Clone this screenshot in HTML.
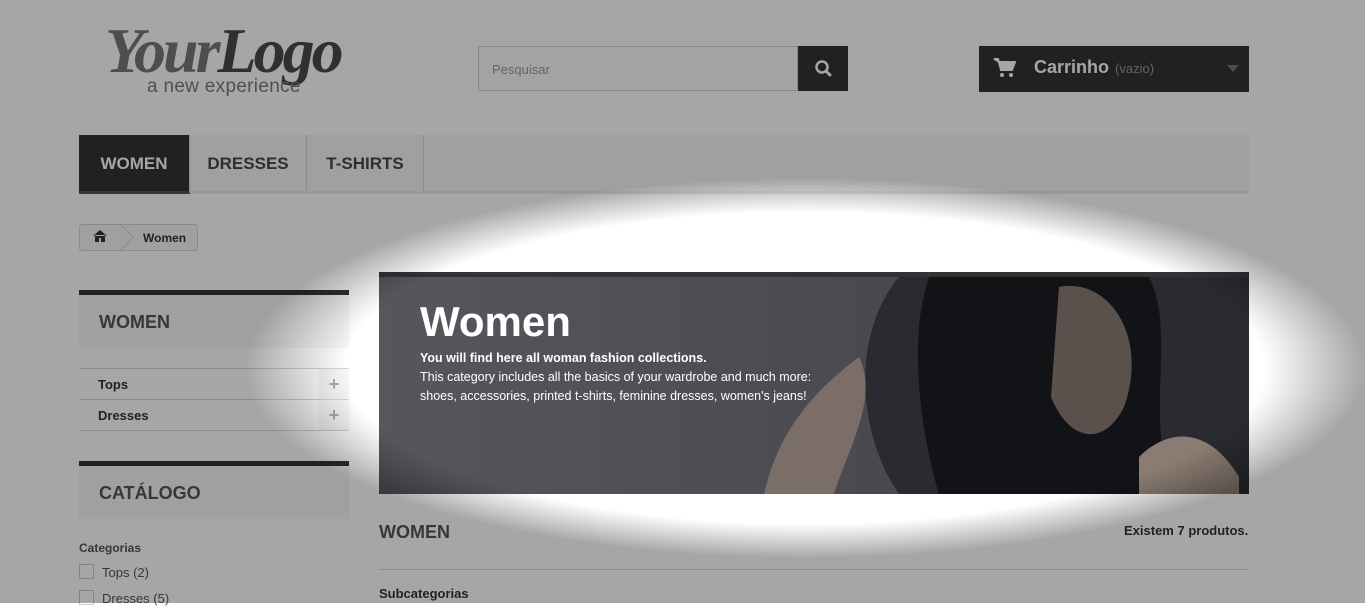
<!DOCTYPE html>
<html><head><meta charset="utf-8"><style>
*{margin:0;padding:0;box-sizing:border-box}
body{width:1365px;height:603px;overflow:hidden;background:#fff;font-family:"Liberation Sans",Arial,sans-serif;position:relative;color:#333}
.abs{position:absolute}
.logo1{left:105px;top:14px;font-family:"Liberation Serif",serif;font-style:italic;font-size:64px;font-weight:bold;color:#777;letter-spacing:-3px}
.logo1 b{color:#4a4a4a}
.logo2{left:147px;top:76px;font-size:19px;color:#7a7a7a;letter-spacing:0.3px}
.search{left:478px;top:46px;width:320px;height:45px;border:1px solid #d6d4d4;background:#fbfbfb;font-size:13px;color:#999;padding:15px 0 0 13px}
.sbtn{left:798px;top:46px;width:50px;height:45px;background:#333}
.cart{left:979px;top:46px;width:270px;height:46px;background:#333;color:#fff;font-size:18px;font-weight:bold;padding:11px 0 0 55px}
.cart small{font-size:13px;font-weight:normal;color:#9a9a9a;margin-left:6px}
.nav{left:79px;top:135px;width:1170px;height:59px;background:#f6f6f6;border-bottom:3px solid #e9e9e9}
.nav div{position:absolute;top:0;height:56px;font-size:17px;font-weight:bold;color:#484848;padding-top:19px;text-align:center;border-right:1px solid #d6d4d4}
.bc{left:79px;top:224px;width:119px;height:27px;border:1px solid #d6d4d4;border-radius:3px;background:#f6f6f6;font-size:12px;font-weight:bold;color:#333;padding:6px 0 0 63px}
.bh{left:79px;width:270px;height:58px;background:#f6f6f6;border-top:5px solid #333;font-size:18px;font-weight:bold;color:#555;padding:17px 0 0 20px}
.li{left:79px;width:270px;height:31px;border-top:1px solid #d6d4d4;font-size:13px;font-weight:bold;color:#333;padding:8px 0 0 19px}
.li span{position:absolute;right:0;top:0;width:30px;height:30px;background:#f6f6f6;color:#aaa;font-size:18px;text-align:center;line-height:30px}
.banner{left:379px;top:272px;width:870px;height:222px;border-top:5px solid #333;background:linear-gradient(90deg,#55575c 0%,#4a4c51 50%,#3c3e43 100%);overflow:hidden}
.ov{left:0;top:0;width:1365px;height:603px;background:radial-gradient(ellipse 560px 190px at 805px 368px,rgba(0,0,0,0) 82%,rgba(0,0,0,0.35) 100%);pointer-events:none}
</style></head><body>
<div class="abs logo1">Your<b>Logo</b></div>
<div class="abs logo2">a new experience</div>
<div class="abs search">Pesquisar</div>
<div class="abs sbtn"><svg width="50" height="45"><circle cx="24" cy="21" r="5.5" fill="none" stroke="#fff" stroke-width="2.5"/><line x1="28" y1="25" x2="32" y2="29" stroke="#fff" stroke-width="3" stroke-linecap="round"/></svg></div>
<div class="abs cart">Carrinho<small>(vazio)</small>
<svg class="abs" style="left:14px;top:11px" width="24" height="22"><path d="M1 2h4l3 11h11l3-8H7z" fill="#fff" stroke="#fff" stroke-width="2"/><circle cx="9" cy="18" r="2" fill="#fff"/><circle cx="18" cy="18" r="2" fill="#fff"/></svg>
<svg class="abs" style="left:248px;top:19px" width="12" height="8"><path d="M0 0h12L6 7z" fill="#777"/></svg></div>
<div class="abs nav">
<div style="left:0;width:111px;background:#333;color:#fff;border-bottom:3px solid #555;height:59px">WOMEN</div>
<div style="left:111px;width:117px">DRESSES</div>
<div style="left:228px;width:117px">T-SHIRTS</div>
</div>
<div class="abs bc">Women
<svg class="abs" style="left:12px;top:4px" width="16" height="14"><path d="M1 7L8 1l7 6M3 6v7h4V9h2v4h4V6" fill="#333"/></svg>
<svg class="abs" style="left:40px;top:-1px" width="14" height="27"><path d="M0 0l13 13L0 27" fill="none" stroke="#d6d4d4"/></svg></div>
<div class="abs bh" style="top:290px">WOMEN</div>
<div class="abs li" style="top:368px">Tops<span>+</span></div>
<div class="abs li" style="top:399px">Dresses<span>+</span></div>
<div class="abs" style="left:79px;top:430px;width:270px;border-top:1px solid #d6d4d4"></div>
<div class="abs bh" style="top:461px">CATÁLOGO</div>
<div class="abs" style="left:79px;top:541px;font-size:12px;font-weight:bold;color:#555">Categorias</div>
<div class="abs" style="left:79px;top:564px;width:15px;height:15px;border:1px solid #ccc"></div>
<div class="abs" style="left:102px;top:565px;font-size:13px;color:#555">Tops (2)</div>
<div class="abs" style="left:79px;top:590px;width:15px;height:15px;border:1px solid #ccc"></div>
<div class="abs" style="left:102px;top:591px;font-size:13px;color:#555">Dresses (5)</div>
<div class="abs banner">
<svg class="abs" style="left:0;top:0" width="870" height="217">
<path d="M520 0 C470 60 480 160 520 217 L870 217 L870 0 Z" fill="#2a2b30"/>
<path d="M550 0 C520 90 560 217 560 217 L800 217 C760 150 800 60 770 0Z" fill="#121317"/>
<path d="M385 217 C400 150 440 110 480 80 C500 120 470 170 455 217Z" fill="#7b6e66"/>
<path d="M680 10 C730 0 770 60 745 130 C725 170 690 165 672 120Z" fill="#5b514c"/>
<path d="M760 180 C790 150 830 150 860 200 L860 217 L760 217Z" fill="#8a7c72"/>
</svg>
<div class="abs" style="left:41px;top:21px;font-size:42px;font-weight:bold;color:#fff">Women</div>
<div class="abs" style="left:41px;top:72px;font-size:12.5px;color:#fff;line-height:19px"><b>You will find here all woman fashion collections.</b><br>This category includes all the basics of your wardrobe and much more:<br>shoes, accessories, printed t-shirts, feminine dresses, women's jeans!</div>
</div>
<div class="abs" style="left:379px;top:522px;font-size:18px;font-weight:bold;color:#555">WOMEN</div>
<div class="abs" style="left:1124px;top:523px;font-size:13px;font-weight:bold;color:#333">Existem 7 produtos.</div>
<div class="abs" style="left:379px;top:569px;width:870px;border-top:1px solid #d6d4d4"></div>
<div class="abs" style="left:379px;top:586px;font-size:13px;font-weight:bold;color:#333">Subcategorias</div>
<div class="abs ov"></div>
</body></html>
